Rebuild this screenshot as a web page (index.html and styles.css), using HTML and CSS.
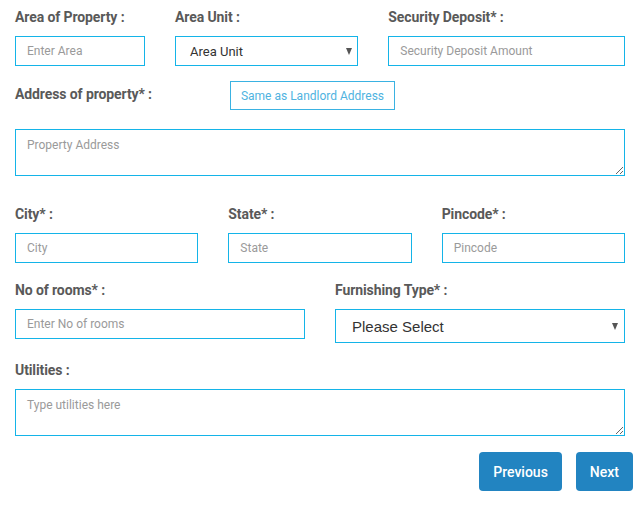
FILE: index.html
```html
<!DOCTYPE html>
<html>
<head>
<meta charset="utf-8">
<link rel="stylesheet" href="styles.css">
</head>
<body>
<form class="card">
  <div class="row r1">
    <div class="col c3">
      <label class="lbl">Area of Property :</label>
      <input class="inp" type="text" placeholder="Enter Area">
    </div>
    <div class="col c4">
      <label class="lbl">Area Unit :</label>
      <div class="sel sel-sm"><span>Area Unit</span><i class="arrow"></i></div>
    </div>
    <div class="col c5">
      <label class="lbl">Security Deposit* :</label>
      <input class="inp" type="text" placeholder="Security Deposit Amount">
    </div>
  </div>

  <div class="row r2">
    <div class="col c12 addr-head">
      <label class="lbl">Address of property* :</label>
      <button type="button" class="same-btn">Same as Landlord Address</button>
    </div>
  </div>

  <div class="row r2b">
    <div class="col c12">
      <textarea class="ta" placeholder="Property Address"></textarea>
    </div>
  </div>

  <div class="row r3">
    <div class="col c4">
      <label class="lbl">City* :</label>
      <input class="inp" type="text" placeholder="City">
    </div>
    <div class="col c4">
      <label class="lbl">State* :</label>
      <input class="inp" type="text" placeholder="State">
    </div>
    <div class="col c4">
      <label class="lbl">Pincode* :</label>
      <input class="inp" type="text" placeholder="Pincode">
    </div>
  </div>

  <div class="row r4">
    <div class="col c6">
      <label class="lbl">No of rooms* :</label>
      <input class="inp" type="text" placeholder="Enter No of rooms">
    </div>
    <div class="col c6">
      <label class="lbl">Furnishing Type* :</label>
      <div class="sel sel-lg"><span>Please Select</span><i class="arrow"></i></div>
    </div>
  </div>

  <div class="row r5">
    <div class="col c12">
      <label class="lbl">Utilities :</label>
      <textarea class="ta" placeholder="Type utilities here"></textarea>
    </div>
  </div>

  <div class="actions">
    <button type="button" class="nav-btn">Previous</button>
    <button type="button" class="nav-btn">Next</button>
  </div>
</form>
</body>
</html>
```

FILE: styles.css
```css
html, body {
  margin: 0;
  padding: 0;
  background: #ffffff;
  overflow: hidden;
}

body {
  font-family: Roboto, "Liberation Sans", Arial, sans-serif;
}

.card {
  width: 640px;
  background: #ffffff;
  padding: 7px 0 9px 0;
  box-shadow: 0 2px 5px rgba(0, 0, 0, 0.13);
  box-sizing: border-box;
}

.row {
  display: flex;
}

.col {
  box-sizing: border-box;
  padding: 0 15px;
  display: flex;
  flex-direction: column;
}

.c3 { width: 25%; }
.c4 { width: 33.3333%; }
.c5 { width: 41.6667%; }
.c6 { width: 50%; }
.c12 { width: 100%; }

.lbl {
  display: block;
  font-size: 14px;
  font-weight: 700;
  line-height: 20px;
  color: #595959;
  margin-bottom: 9px;
  letter-spacing: -0.1px;
}

.inp {
  box-sizing: border-box;
  height: 30px;
  width: 100%;
  margin: 0;
  border: 1px solid #14b4e8;
  border-radius: 0;
  padding: 0 11px;
  font-family: Roboto, "Liberation Sans", sans-serif;
  font-size: 12px;
  color: #333;
  outline: none;
  background: #fff;
}

.inp::placeholder,
.ta::placeholder {
  color: #9a9a9a;
}

.sel {
  box-sizing: border-box;
  width: 100%;
  border: 1px solid #14b4e8;
  display: flex;
  align-items: center;
  justify-content: space-between;
  background: #fff;
  color: #333;
}

.sel-sm {
  height: 30px;
  padding: 0 5px 0 14px;
  font-family: Roboto, "Liberation Sans", sans-serif;
  font-size: 13px;
}

.sel-lg {
  height: 34px;
  padding: 0 6px 0 16px;
  font-family: "Liberation Sans", Arial, sans-serif;
  font-size: 15px;
}

.arrow {
  display: block;
  width: 0;
  height: 0;
  border-left: 3.5px solid transparent;
  border-right: 3.5px solid transparent;
  border-top: 7px solid #555;
}

.r2 {
  margin-top: 15px;
}

.addr-head {
  flex-direction: row;
  align-items: center;
}

.addr-head .lbl {
  margin-bottom: 0;
  width: 215px;
  margin-top: -4px;
}

.same-btn {
  box-sizing: border-box;
  height: 29px;
  width: 165px;
  padding: 0;
  border: 1px solid #3ab2e2;
  background: #fff;
  color: #4fb3df;
  font-family: Roboto, "Liberation Sans", sans-serif;
  font-size: 12px;
  border-radius: 0;
}

.r2b {
  margin-top: 19px;
}

.ta {
  box-sizing: border-box;
  display: block;
  width: 100%;
  height: 47px;
  margin: 0;
  border: 1px solid #14b4e8;
  border-radius: 0;
  padding: 8px 11px;
  font-family: Roboto, "Liberation Sans", sans-serif;
  font-size: 12px;
  color: #333;
  outline: none;
  resize: vertical;
}

.r3 {
  margin-top: 28px;
}

.r4 {
  margin-top: 17px;
}

.r5 {
  margin-top: 17px;
}

.actions {
  display: flex;
  justify-content: flex-end;
  gap: 14px;
  padding-right: 7px;
  margin-top: 16px;
}

.nav-btn {
  height: 39px;
  border: none;
  border-radius: 4px;
  background: #2284c1;
  color: #ffffff;
  font-family: Roboto, "Liberation Sans", sans-serif;
  font-size: 14px;
  font-weight: 500;
  padding: 0 14px;
}
```
